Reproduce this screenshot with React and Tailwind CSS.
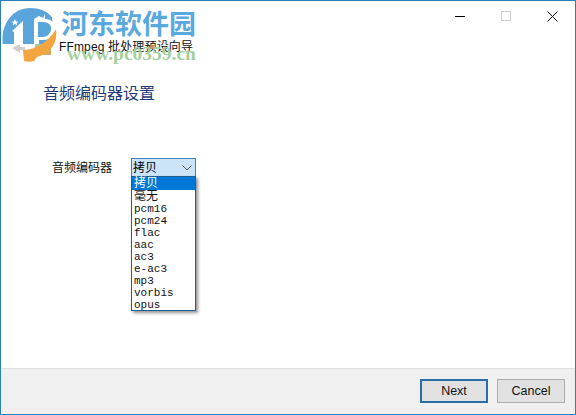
import React from 'react';

const options = ['拷贝', '毫无', 'pcm16', 'pcm24', 'flac', 'aac', 'ac3', 'e-ac3', 'mp3', 'vorbis', 'opus'];

function Watermark() {
  return (
    <div className="absolute left-0 top-0 w-[200px] h-[64px] pointer-events-none">
      {/* 로고 */}
      <svg className="absolute left-0 top-0" width="60" height="64" viewBox="0 0 60 64">
        <path d="M2 44 C-1 26 10 7 29 7 C38 7 46 10 51 16 L53 43 L2 43 Z" fill="#5aa6dc" />
        <path d="M11 30 L22 20 L22 43 L13 43 L13 31 Z" fill="#ffffff" />
        <path d="M33 43 L33 18 L38 15 L42 17 L44 13 L44 18 C52 18 55 24 54 30 C53 36 48 39 42 39 L38 39 L38 43 Z" fill="#ffffff" />
        <path d="M37 21 L42 21 C48 21 51 25 50 29 C49 33 46 36 42 36 L37 36 Z" fill="#5aa6dc" />
        <path d="M14 18 L15 20.4 L17.6 20.4 L15.6 22 L16.4 24.4 L14 23 L11.6 24.4 L12.4 22 L10.4 20.4 L13 20.4 Z" fill="#ffffff" />
        <path d="M22 49 C33 49 47 42 55 28 C57 42 50 52 36 56 L33 60 C30 61 26 61 23 60 Z" fill="#f3a63f" />
        <path d="M11 47 L19 43 L19 46 L24 46 L24 49 L19 49 L19 52 Z" fill="#cfcfcf" />
      </svg>
      <div className="absolute left-[60px] top-[8px] text-[27px] leading-[32px] font-bold text-[#5aa9de] font-['Liberation_Serif','Noto_Sans_CJK_SC',serif] whitespace-nowrap">
        河东软件园
      </div>
      <div className="absolute left-[66px] top-[42px] text-[19.5px] leading-[22px] font-bold text-[#a3cfa0] font-['Liberation_Serif',serif] whitespace-nowrap">
        www.pc0359.cn
      </div>
    </div>
  );
}

function WizardIcon() {
  return (
    <svg width="16" height="16" viewBox="0 0 16 16">
      <rect x="0" y="0" width="16" height="16" fill="#9ccba4" />
      <path d="M8 0 H16 V16 H3 Z" fill="#d9a860" />
      <path d="M2 12 L13 3 L9 14 Z" fill="#eef3dc" />
    </svg>
  );
}

export default function App() {
  return (
    <div className="relative w-[576px] h-[415px] flex flex-col bg-white border border-[#2b7fb5] overflow-hidden font-['Liberation_Sans','Noto_Sans_CJK_SC',sans-serif]">
      {/* 타이틀바 */}
      <div className="h-[30px] flex justify-end items-start shrink-0">
        <div className="w-[46px] h-[30px] flex items-center justify-center">
          <div className="w-[10px] h-px bg-black" />
        </div>
        <div className="w-[46px] h-[30px] flex items-center justify-center">
          <div className="w-[10px] h-[10px] border border-[#cccccc]" />
        </div>
        <div className="w-[46px] h-[30px] flex items-center justify-center">
          <svg width="11" height="11" viewBox="0 0 11 11">
            <path d="M0.5 0.5 L10.5 10.5 M10.5 0.5 L0.5 10.5" stroke="#111" strokeWidth="1" />
          </svg>
        </div>
      </div>

      {/* 본문 */}
      <div className="flex-1 min-h-0 flex flex-col">
        <div className="pl-[34px] mt-[8px] flex items-center gap-[8px] h-[16px]">
          <WizardIcon />
          <span className="text-[12px] leading-[16px] tracking-[0.15px] text-[#111]">FFmpeg 批处理预设向导</span>
        </div>
        <div className="pl-[42px] mt-[28px] text-[16px] leading-[22px] text-[#1f3a78]">音频编码器设置</div>
        <div className="pl-[51px] mt-[53px] flex items-center gap-[19px]">
          <span className="text-[12px] leading-[16px] text-[#111]">音频编码器</span>
          <div className="w-[65px] h-[20px] flex items-center justify-between pl-[1px] pr-[3px] bg-[#cce4f7] border border-[#3f80b8] text-[12px] text-black">
            <span>拷贝</span>
            <svg width="10" height="6" viewBox="0 0 10 6">
              <path d="M0.5 0.5 L5 5 L9.5 0.5" fill="none" stroke="#555" strokeWidth="1" />
            </svg>
          </div>
        </div>
      </div>

      {/* 하단 버튼 */}
      <div className="h-[46px] shrink-0 bg-[#f0f0f0] border-t border-[#dfdfdf] flex items-start justify-end gap-[9px] pt-[10px] pr-[10px]">
        <button className="w-[68px] h-[24px] bg-[#e1e1e1] border-2 border-[#2a6ea8] text-[12.5px] leading-none text-[#111]">Next</button>
        <button className="w-[68px] h-[24px] bg-[#e1e1e1] border border-[#adadad] text-[12.5px] leading-none text-[#111]">Cancel</button>
      </div>

      {/* 드롭다운 */}
      <div className="absolute left-[130px] top-[175px] w-[65px] h-[135px] bg-white border border-[#1f5f94] shadow-[2px_2px_3px_rgba(60,60,60,0.55)] font-['Liberation_Mono','Noto_Sans_CJK_SC',monospace] text-[11px] leading-[14px] text-[#111]">
        {options.map((o, i) => (
          <div
            key={o}
            className={`pl-[2px] whitespace-nowrap ${i === 0 ? 'h-[13px] leading-[15px] text-[12px] bg-[#0078d7] text-white' : i === 1 ? 'h-[12px] leading-[15px] text-[12px]' : 'h-[12px]'}`}
          >
            {o}
          </div>
        ))}
      </div>

      <Watermark />
    </div>
  );
}
